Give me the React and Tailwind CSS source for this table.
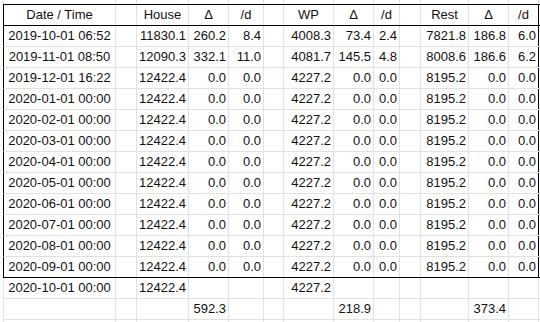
import React from 'react';

const widths = [
  'w-[112px]', 'w-[21px]', 'w-[52px]', 'w-[40px]', 'w-[35px]', 'w-[20px]', 'w-[50px]',
  'w-[40px]', 'w-[26px]', 'w-[21px]', 'w-[48px]', 'w-[40px]', 'w-[30px]',
];

const header = ['Date / Time', '', 'House', 'Δ', '/d', '', 'WP', 'Δ', '/d', '', 'Rest', 'Δ', '/d'];

const dated = (d) => [d, '', '12422.4', '0.0', '0.0', '', '4227.2', '0.0', '0.0', '', '8195.2', '0.0', '0.0'];

const data = [
  ['2019-10-01 06:52', '', '11830.1', '260.2', '8.4', '', '4008.3', '73.4', '2.4', '', '7821.8', '186.8', '6.0'],
  ['2019-11-01 08:50', '', '12090.3', '332.1', '11.0', '', '4081.7', '145.5', '4.8', '', '8008.6', '186.6', '6.2'],
  dated('2019-12-01 16:22'),
  dated('2020-01-01 00:00'),
  dated('2020-02-01 00:00'),
  dated('2020-03-01 00:00'),
  dated('2020-04-01 00:00'),
  dated('2020-05-01 00:00'),
  dated('2020-06-01 00:00'),
  dated('2020-07-01 00:00'),
  dated('2020-08-01 00:00'),
  dated('2020-09-01 00:00'),
];

const after = [
  ['2020-10-01 00:00', '', '12422.4', '', '', '', '4227.2', '', '', '', '', '', ''],
  ['', '', '', '592.3', '', '', '', '218.9', '', '', '', '373.4', ''],
];

const Cells = ({ values, head, boxed }) =>
  widths.map((w, i) => {
    const last = i === widths.length - 1;
    const edge = last && boxed ? 'border-black' : 'border-[#e2e2e2]';
    const align = head || i === 0 ? 'text-center' : 'text-right';
    return (
      <div key={i} className={`${w} shrink-0 border-r ${edge} px-[2px] leading-[20px] whitespace-nowrap ${align}`}>
        {values ? values[i] : ''}
      </div>
    );
  });

export default function App() {
  return (
    <div className="w-[540px] h-[322px] overflow-hidden bg-white text-[13px] text-[#111] font-['Liberation_Sans',Arial,sans-serif]">
      <div className="ml-[3px] flex h-[4px] border-l border-[#e2e2e2]">
        <Cells />
      </div>
      <div className="ml-[3px] flex h-[22px] border-y border-l border-black">
        <Cells values={header} head boxed />
      </div>
      {data.map((row, r) => (
        <div
          key={r}
          className={`ml-[3px] flex h-[21px] border-b border-l border-l-black ${
            r === data.length - 1 ? 'border-b-black' : 'border-b-[#e2e2e2]'
          }`}
        >
          <Cells values={row} boxed />
        </div>
      ))}
      {after.map((row, r) => (
        <div key={r} className="ml-[3px] flex h-[21px] border-b border-l border-[#e2e2e2]">
          <Cells values={row} />
        </div>
      ))}
      <div className="ml-[3px] flex h-[21px] border-l border-[#e2e2e2]">
        <Cells />
      </div>
    </div>
  );
}
